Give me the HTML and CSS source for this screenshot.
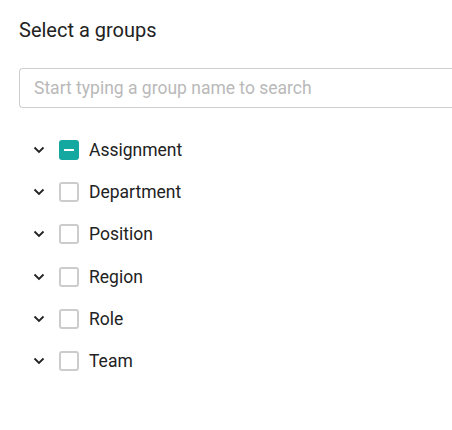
FILE: index.html
```html
<!DOCTYPE html>
<html>
<head>
<meta charset="utf-8">
<link rel="stylesheet" href="styles.css">
</head>
<body>
<div class="panel">
  <h2 class="title">Select a groups</h2>
  <input class="search" type="text" placeholder="Start typing a group name to search">
  <ul class="tree">
    <li class="row">
      <svg class="chev" viewBox="0 0 12 8" width="12" height="8"><path d="M1.5 1.5 L6 6 L10.5 1.5" fill="none" stroke="#222" stroke-width="1.8"/></svg>
      <span class="cb cb-partial"><span class="dash"></span></span>
      <span class="label">Assignment</span>
    </li>
    <li class="row">
      <svg class="chev" viewBox="0 0 12 8" width="12" height="8"><path d="M1.5 1.5 L6 6 L10.5 1.5" fill="none" stroke="#222" stroke-width="1.8"/></svg>
      <span class="cb"></span>
      <span class="label">Department</span>
    </li>
    <li class="row">
      <svg class="chev" viewBox="0 0 12 8" width="12" height="8"><path d="M1.5 1.5 L6 6 L10.5 1.5" fill="none" stroke="#222" stroke-width="1.8"/></svg>
      <span class="cb"></span>
      <span class="label">Position</span>
    </li>
    <li class="row">
      <svg class="chev" viewBox="0 0 12 8" width="12" height="8"><path d="M1.5 1.5 L6 6 L10.5 1.5" fill="none" stroke="#222" stroke-width="1.8"/></svg>
      <span class="cb"></span>
      <span class="label">Region</span>
    </li>
    <li class="row">
      <svg class="chev" viewBox="0 0 12 8" width="12" height="8"><path d="M1.5 1.5 L6 6 L10.5 1.5" fill="none" stroke="#222" stroke-width="1.8"/></svg>
      <span class="cb"></span>
      <span class="label">Role</span>
    </li>
    <li class="row">
      <svg class="chev" viewBox="0 0 12 8" width="12" height="8"><path d="M1.5 1.5 L6 6 L10.5 1.5" fill="none" stroke="#222" stroke-width="1.8"/></svg>
      <span class="cb"></span>
      <span class="label">Team</span>
    </li>
  </ul>
</div>
</body>
</html>
```
FILE: styles.css
```css
html, body {
  margin: 0;
  padding: 0;
  background: #fff;
}
body {
  font-family: Roboto, "Liberation Sans", sans-serif;
  color: #222;
  overflow: hidden;
}
.panel {
  box-sizing: border-box;
  width: 452px;
  padding: 18px 0 0 19px;
}
.title {
  margin: 0;
  font-size: 20px;
  font-weight: 400;
  line-height: 24px;
  color: #222;
}
.search {
  display: block;
  box-sizing: border-box;
  margin-top: 26px;
  width: 100%;
  height: 40px;
  border: 1px solid #cfcfcf;
  border-right: none;
  border-radius: 4px 0 0 4px;
  padding: 0 14px;
  font-family: Roboto, "Liberation Sans", sans-serif;
  font-size: 17.5px;
  color: #222;
  outline: none;
}
.search::placeholder {
  color: #b9b9b9;
}
.tree {
  list-style: none;
  margin: 21px 0 0 0;
  padding: 0;
}
.row {
  display: flex;
  align-items: center;
  height: 42.2px;
}
.chev {
  margin-left: 14px;
  width: 12px;
  height: 8px;
}
.cb {
  box-sizing: border-box;
  width: 20px;
  height: 20px;
  margin-left: 14px;
  border: 2px solid #cccccc;
  border-radius: 3px;
  display: flex;
  align-items: center;
  justify-content: center;
}
.cb-partial {
  background: #14a8a0;
  border-color: #14a8a0;
}
.dash {
  width: 10px;
  height: 2px;
  background: #fff;
}
.label {
  margin-left: 10px;
  font-size: 17.5px;
  color: #222;
}
```
